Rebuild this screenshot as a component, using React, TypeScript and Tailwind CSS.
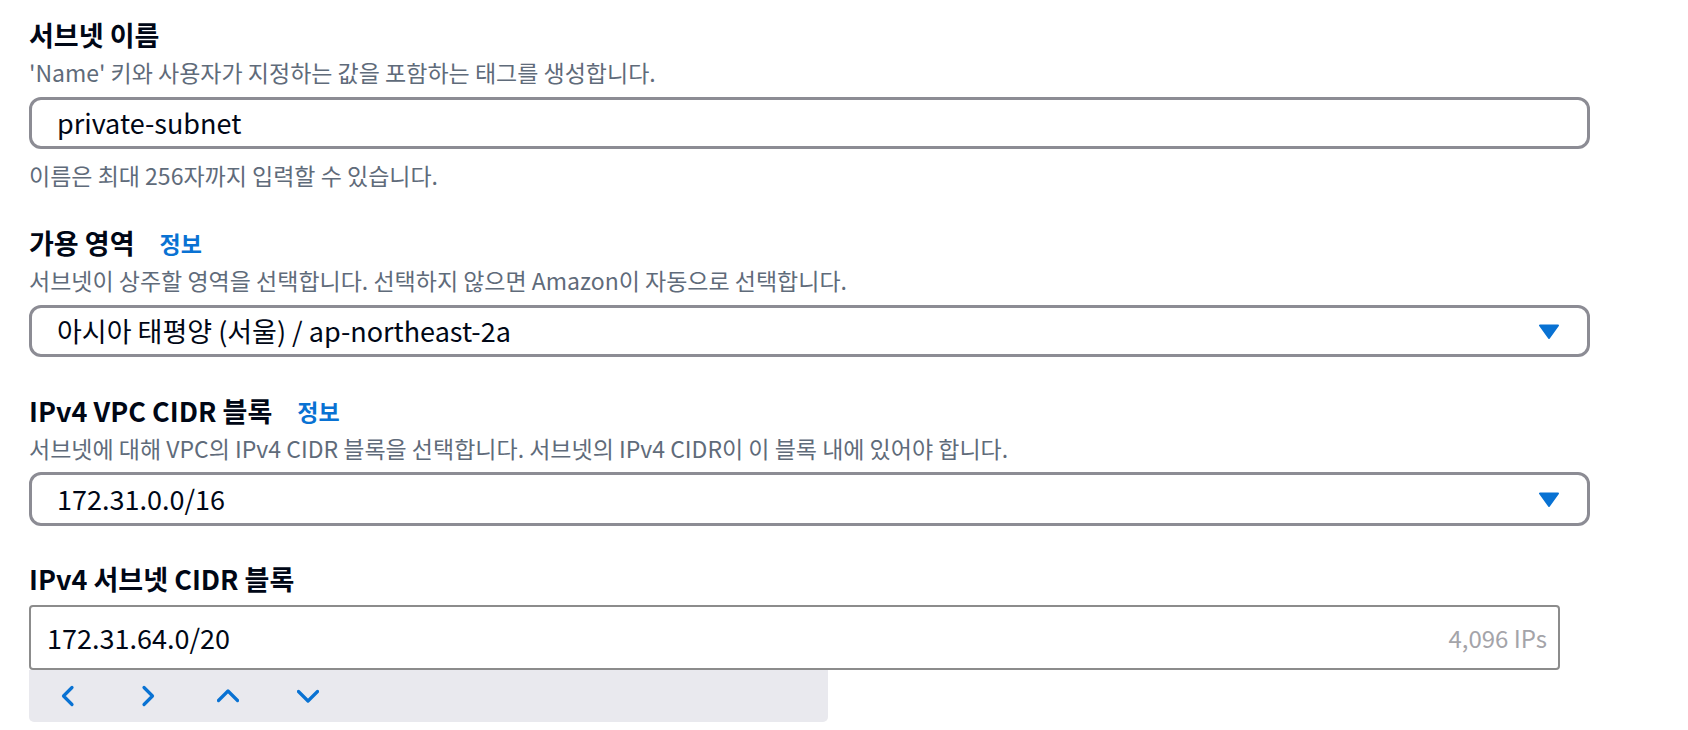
const font = { fontFamily: '"Noto Sans CJK KR", "Noto Sans", sans-serif' }

function Label({ text, info }: { text: string; info?: boolean }) {
  return (
    <div className="flex h-[36px] items-center gap-[25px]">
      <span className="text-[27px] font-bold leading-[36px] text-[#000716]">{text}</span>
      {info && <span className="text-[23px] font-bold leading-[36px] text-[#0972d3]">정보</span>}
    </div>
  )
}

function Description({ text }: { text: string }) {
  return <p className="mt-[5px] text-[23px] leading-[28px] text-[#5f6b7a]">{text}</p>
}

function Select({ value, tall }: { value: string; tall?: boolean }) {
  return (
    <div
      className={`flex w-[1561px] items-center justify-between rounded-[12px] border-[3px] border-[#8c8c94] bg-white pl-[25px] pr-[28px] ${
        tall ? 'mt-[10px] h-[54px]' : 'mt-[11px] h-[52px]'
      }`}
    >
      <span className="text-[27px] leading-[36px] text-[#000716]">{value}</span>
      <svg width="20" height="15" viewBox="0 0 20 15">
        <path d="M1 1.5 L19 1.5 L10 14 Z" fill="#0972d3" stroke="#0972d3" strokeWidth="2" strokeLinejoin="round" />
      </svg>
    </div>
  )
}

function Chevron({ d }: { d: string }) {
  return (
    <svg width="22" height="22" viewBox="0 0 22 22" fill="none">
      <path d={d} stroke="#0972d3" strokeWidth="3.2" strokeLinecap="round" strokeLinejoin="round" />
    </svg>
  )
}

export default function App() {
  return (
    <div className="min-h-[730px] bg-white pl-[29px] pt-[17px]" style={font}>
      <section>
        <Label text="서브넷 이름" />
        <Description text="'Name' 키와 사용자가 지정하는 값을 포함하는 태그를 생성합니다." />
        <div className="mt-[11px] flex h-[52px] w-[1561px] items-center rounded-[12px] border-[3px] border-[#8c8c94] bg-white pl-[25px]">
          <span className="text-[27px] leading-[36px] text-[#000716]">private-subnet</span>
        </div>
        <p className="mt-[12px] text-[23px] leading-[28px] text-[#5f6b7a]">이름은 최대 256자까지 입력할 수 있습니다.</p>
      </section>

      <section className="mt-[36px]">
        <Label text="가용 영역" info />
        <Description text="서브넷이 상주할 영역을 선택합니다. 선택하지 않으면 Amazon이 자동으로 선택합니다." />
        <Select value="아시아 태평양 (서울) / ap-northeast-2a" />
      </section>

      <section className="mt-[36px]">
        <Label text="IPv4 VPC CIDR 블록" info />
        <Description text="서브넷에 대해 VPC의 IPv4 CIDR 블록을 선택합니다. 서브넷의 IPv4 CIDR이 이 블록 내에 있어야 합니다." />
        <Select value="172.31.0.0/16" tall />
      </section>

      <section className="mt-[35px]">
        <Label text="IPv4 서브넷 CIDR 블록" />
        <div className="mt-[8px] flex h-[65px] w-[1531px] items-center justify-between rounded-[4px] border-[2px] border-[#8c8c8c] bg-white pl-[16px] pr-[11px]">
          <span className="text-[27px] leading-[36px] text-[#000716]">172.31.64.0/20</span>
          <span className="text-[24px] leading-[32px] text-[#a4a4a9]">4,096 IPs</span>
        </div>
        <div className="flex h-[52px] w-[799px] items-center gap-[58px] rounded-b-[5px] bg-[#e9e9ee] pl-[28px]">
          <Chevron d="M15 2.5 L6.5 11 L15 19.5" />
          <Chevron d="M7 2.5 L15.5 11 L7 19.5" />
          <Chevron d="M1.5 15.5 L11 6 L20.5 15.5" />
          <Chevron d="M1.5 6.5 L11 16 L20.5 6.5" />
        </div>
      </section>
    </div>
  )
}
